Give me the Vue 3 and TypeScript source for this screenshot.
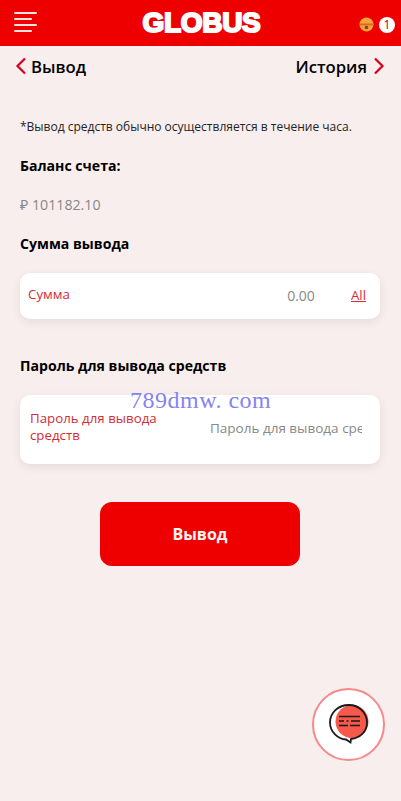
<template>
  <div class="page">
    <header class="topbar">
      <svg class="menu" width="24" height="22" viewBox="0 0 24 22">
        <rect x="0" y="0" width="23" height="2" rx="1" />
        <rect x="0" y="6" width="18" height="2" rx="1" />
        <rect x="0" y="12" width="23" height="2" rx="1" />
        <rect x="0" y="18" width="18" height="2" rx="1" />
      </svg>
      <div class="logo">GLOBUS</div>
      <div class="top-right">
        <svg class="bell" width="15" height="15" viewBox="0 0 15 15">
          <circle cx="7.500" cy="7.500" r="7" fill="#f5a33c" />
          <path d="M1 6.500h13v2H1z" fill="#e0662a" />
          <circle cx="7.500" cy="10.500" r="1.800" fill="#7a4a12" />
        </svg>
        <span class="count">1</span>
      </div>
    </header>

    <nav class="subnav">
      <div class="nav-side">
        <svg width="12" height="18" viewBox="0 0 12 18"><path d="M10 1.500 2.500 9l7.500 7.500" /></svg>
        <span>Вывод</span>
      </div>
      <div class="nav-side nav-right">
        <span>История</span>
        <svg width="12" height="18" viewBox="0 0 12 18"><path d="M2 1.500 9.500 9 2 16.500" /></svg>
      </div>
    </nav>

    <main class="content">
      <p class="notice">*Вывод средств обычно осуществляется в течение часа.</p>
      <h3 class="balance-title">Баланс счета:</h3>
      <p class="balance">₽ {{ balance }}</p>
      <h3 class="sum-title">Сумма вывода</h3>
      <div class="card sum-card">
        <span class="label">Сумма</span>
        <span class="amount">0.00</span>
        <a class="all">All</a>
      </div>
      <h3 class="pass-title">Пароль для вывода средств</h3>
      <div class="card pass-card">
        <span class="label pass-label">Пароль для вывода средств</span>
        <input class="pass-input" type="password" placeholder="Пароль для вывода средств" />
      </div>
      <div class="actions">
        <button class="submit">Вывод</button>
      </div>
    </main>

    <div class="watermark">789dmw. com</div>

    <div class="chat">
      <svg width="42" height="42" viewBox="0 0 42 42">
        <circle cx="24" cy="17.500" r="16.500" fill="#f4594c" />
        <path d="M21 1C10 1 2 9 2 18.500S10 35 18 35.500l4.500 3 .5-3.500c9-1 16-7 16-16.500C39 9 31 1 21 1z" fill="none" stroke="#1a1a1a" stroke-width="1.800" />
        <path d="M11 12.500h21M11 17h5M18.500 17h2M23 17h9M11 21.500h9M22 21.500h10" stroke="#1a1a1a" stroke-width="1.400" fill="none" />
      </svg>
    </div>
  </div>
</template>

<script setup lang="ts">
const balance = '101182.10'
</script>

<style>
html,
body {
  margin: 0;
  background: #f9eeee;
}
</style>

<style scoped>
.page {
  position: relative;
  height: 801px;
  background: #f9eeee;
  font-family: "Open Sans", "Noto Sans", sans-serif;
  overflow: hidden;
}

.topbar {
  height: 46px;
  background: #ee0000;
  display: flex;
  align-items: center;
  justify-content: space-between;
  padding: 0 6px 0 14px;
  box-sizing: border-box;
}

.menu {
  fill: #ffe3e3;
}

.logo {
  flex: 1;
  text-align: center;
  margin-left: 6px;
  color: #fff;
  font-family: "Liberation Sans", sans-serif;
  font-weight: 700;
  font-size: 28px;
  line-height: 46px;
  letter-spacing: -0.3px;
  -webkit-text-stroke: 2px #fff;
}

.top-right {
  display: flex;
  align-items: center;
  gap: 5px;
  margin-top: 3px;
}

.count {
  width: 16px;
  height: 16px;
  border-radius: 50%;
  background: #fff;
  color: #a00;
  font-size: 12px;
  line-height: 16px;
  text-align: center;
}

.subnav {
  display: flex;
  justify-content: space-between;
  padding: 8px 16px 0 15px;
  height: 42px;
  box-sizing: border-box;
}

.nav-side {
  display: flex;
  align-items: center;
  gap: 4px;
  height: 24px;
  font-size: 16.700px;
  font-weight: 600;
  color: #000;
}

.nav-right {
  gap: 6px;
}

.nav-side svg path {
  fill: none;
  stroke: #d6001c;
  stroke-width: 2.200;
}

.content {
  padding: 0 21px 0 20px;
}

.notice {
  margin: 0;
  padding-top: 30px;
  font-size: 12px;
  line-height: 18px;
  color: #222;
}

h3 {
  margin: 0;
  font-size: 14.100px;
  line-height: 20px;
  font-weight: 700;
  color: #000;
}

.balance-title {
  margin-top: 20px;
}

.balance {
  margin: 19px 0 0;
  font-size: 14.200px;
  line-height: 20px;
  color: #888;
}

.sum-title {
  margin-top: 19px;
}

.card {
  background: #fff;
  border-radius: 10px;
  box-shadow: 0 3px 10px rgba(0, 0, 0, 0.08);
  display: flex;
  align-items: center;
}

.sum-card {
  height: 46px;
  margin-top: 19px;
  padding: 0 14px 0 8px;
}

.label {
  font-size: 13.300px;
  color: #d42c36;
  margin-top: -4px;
}

.amount {
  margin-left: auto;
  font-size: 14px;
  color: #888;
  margin-top: -2px;
}

.all {
  margin-left: 36px;
  font-size: 13.300px;
  color: #d42c36;
  text-decoration: underline;
  margin-top: -2px;
}

.pass-title {
  margin-top: 37px;
}

.pass-card {
  height: 69px;
  margin-top: 19px;
  padding: 0 18px 0 10px;
  justify-content: space-between;
}

.pass-label {
  width: 150px;
  line-height: 17px;
  margin-top: -5px;
}

.pass-input {
  width: 152px;
  border: 0;
  outline: 0;
  padding: 0;
  background: transparent;
  font-family: inherit;
  font-size: 13.500px;
  margin-top: -4px;
}

.pass-input::placeholder {
  color: #888;
  opacity: 1;
}

.actions {
  display: flex;
  justify-content: center;
  margin-top: 38px;
}

.submit {
  width: 200px;
  height: 64px;
  border: 0;
  border-radius: 12px;
  background: #ee0000;
  color: #fff5f5;
  font-family: inherit;
  font-size: 16px;
  font-weight: 700;
}

.watermark {
  position: absolute;
  left: 130px;
  top: 386px;
  font-family: "Liberation Serif", serif;
  font-size: 24px;
  line-height: 28px;
  letter-spacing: 0.500px;
  color: #8484f0;
}

.chat {
  position: absolute;
  left: 312px;
  top: 688px;
  width: 69px;
  height: 69px;
  border: 2px solid #f48a8a;
  border-radius: 50%;
  background: #fff;
  display: flex;
  align-items: center;
  justify-content: center;
}
</style>
